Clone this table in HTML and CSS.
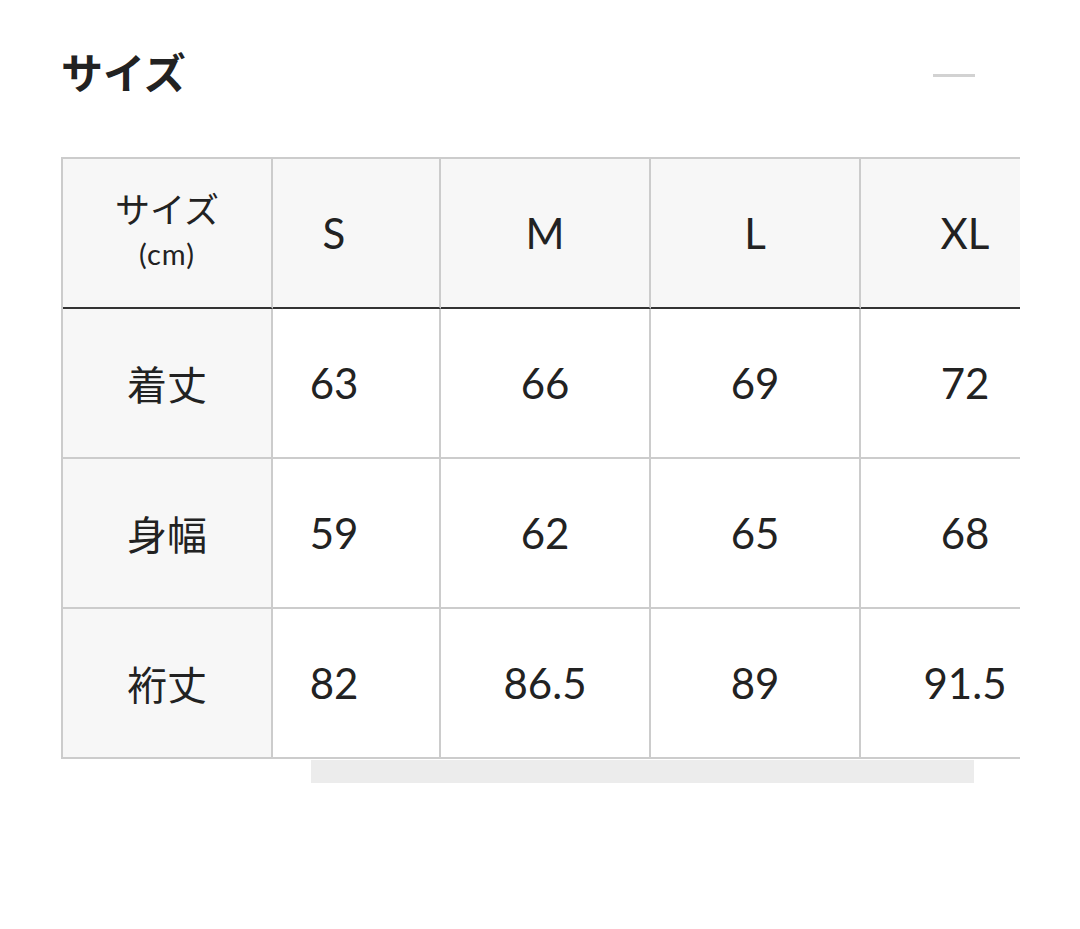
FILE: index.html
```html
<!DOCTYPE html>
<html lang="ja">
<head>
<meta charset="utf-8">
<title>サイズ</title>
<link rel="stylesheet" href="styles.css">
</head>
<body>
<section class="size-section">
  <header class="size-head">
    <h2 class="size-title">サイズ</h2>
    <button class="toggle" aria-label="閉じる"><span class="minus"></span></button>
  </header>
  <div class="scroller">
    <div class="size-grid">
      <div class="cell head label"><span>サイズ</span><span class="unit">(cm)</span></div>
      <div class="cell head col-s">S</div>
      <div class="cell head">M</div>
      <div class="cell head">L</div>
      <div class="cell head">XL</div>

      <div class="cell label">着丈</div>
      <div class="cell col-s">63</div>
      <div class="cell">66</div>
      <div class="cell">69</div>
      <div class="cell">72</div>

      <div class="cell label">身幅</div>
      <div class="cell col-s">59</div>
      <div class="cell">62</div>
      <div class="cell">65</div>
      <div class="cell">68</div>

      <div class="cell label">裄丈</div>
      <div class="cell col-s">82</div>
      <div class="cell">86.5</div>
      <div class="cell">89</div>
      <div class="cell">91.5</div>
    </div>
  </div>
  <div class="scrollbar"></div>
</section>
</body>
</html>
```

FILE: styles.css
```css
html, body {
  margin: 0;
  padding: 0;
  background: #ffffff;
}

body {
  font-family: Lato, "Noto Sans CJK JP", sans-serif;
  color: #222222;
}

.size-section {
  padding: 41px 60px 0 61px;
}

.size-head {
  display: flex;
  align-items: center;
  justify-content: space-between;
  height: 60px;
}

.size-title {
  margin: 0;
  font-family: "Noto Sans CJK JP", sans-serif;
  font-size: 42px;
  font-weight: 700;
  line-height: 60px;
  color: #222222;
}

.toggle {
  border: 0;
  background: none;
  padding: 0;
  margin: 8px 45px 0 0;
  width: 42px;
  height: 20px;
  display: flex;
  align-items: center;
  cursor: pointer;
}

.minus {
  display: block;
  width: 42px;
  height: 3px;
  background: #d2d2d2;
}

.scroller {
  margin-top: 56px;
  overflow: hidden;
}

.size-grid {
  display: grid;
  grid-template-columns: 210px 168px 210px 210px 210px;
  grid-auto-rows: 150px;
  width: max-content;
  border-top: 2px solid #cccccc;
  border-left: 2px solid #cccccc;
}

.cell {
  box-sizing: border-box;
  display: flex;
  flex-direction: column;
  align-items: center;
  justify-content: center;
  border-right: 2px solid #cccccc;
  border-bottom: 2px solid #cccccc;
  font-size: 42px;
  line-height: 1;
  background: #ffffff;
}

.cell.head {
  background: #f7f7f7;
  border-bottom-color: #333333;
}

.cell.label {
  background: #f7f7f7;
  font-family: "Noto Sans CJK JP", sans-serif;
  font-size: 40px;
}

.cell.head.label {
  font-size: 35px;
  line-height: 46px;
  padding-bottom: 4px;
}

.unit {
  font-family: Lato, sans-serif;
  font-size: 29px;
  letter-spacing: 1px;
}

.col-s {
  padding-right: 44px;
}

.scrollbar {
  margin: 1px 0 0 250px;
  width: 663px;
  height: 23px;
  background: #ececec;
}
```
